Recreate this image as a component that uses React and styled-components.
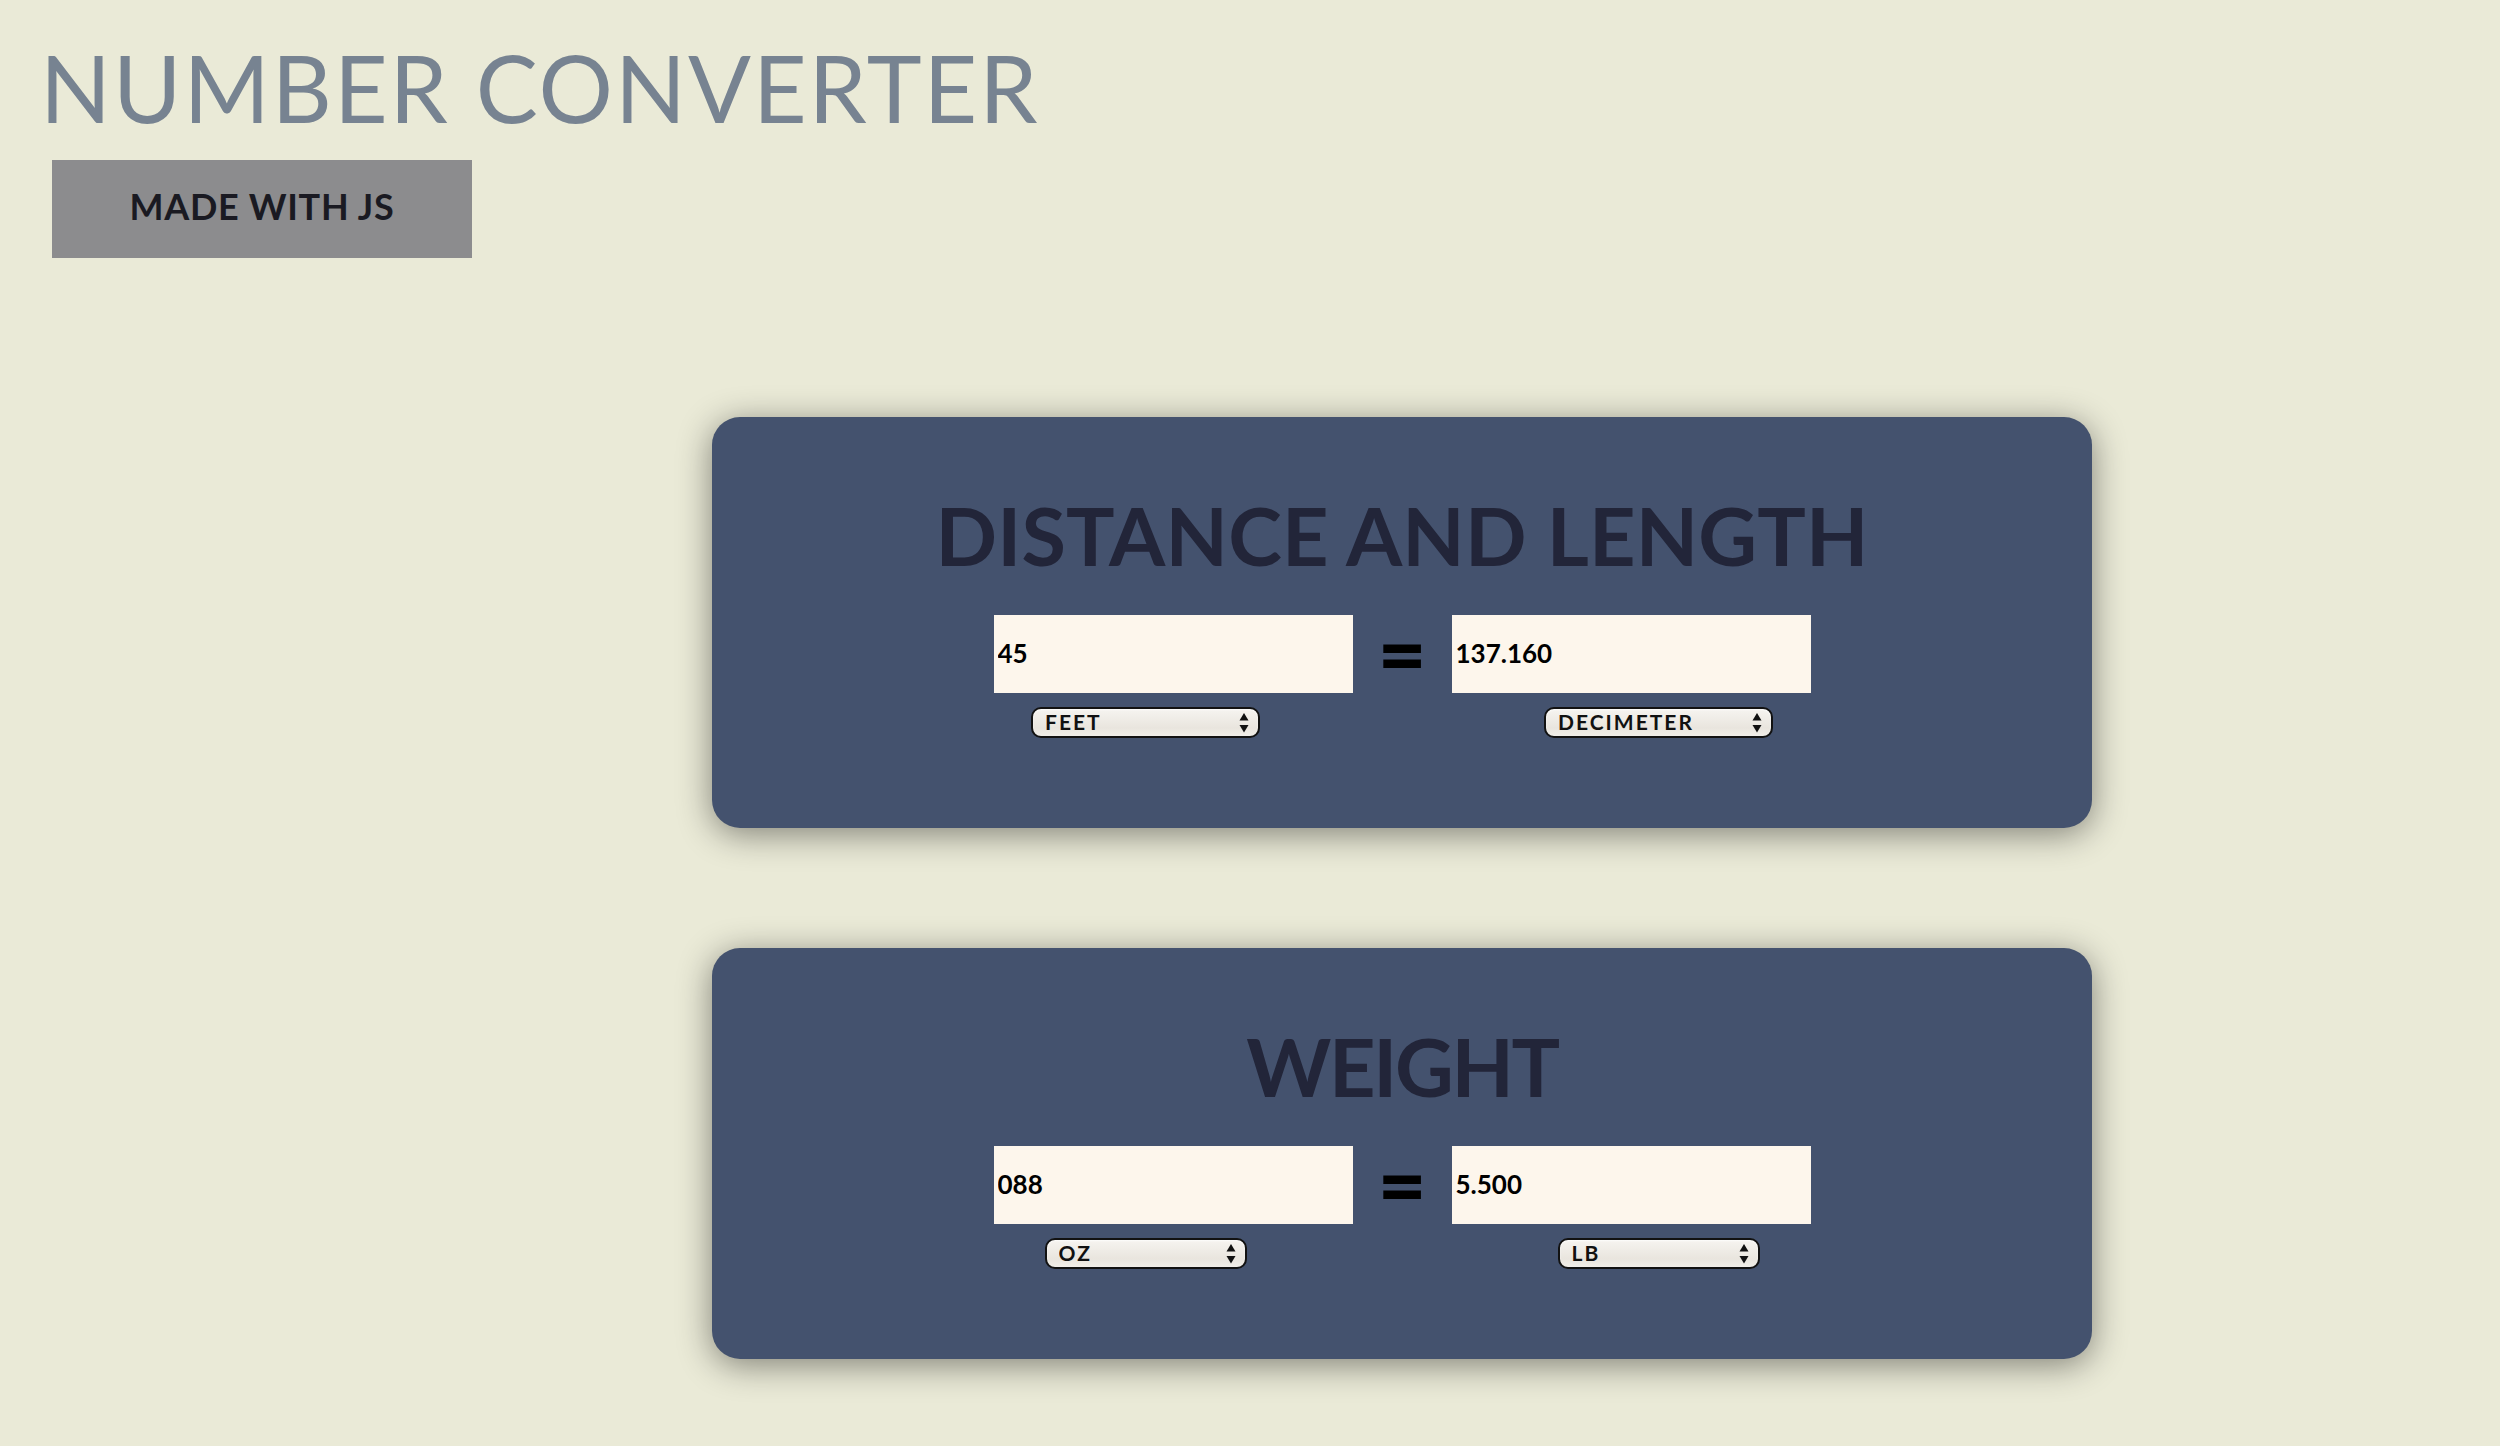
import React from "react";
import styled, { createGlobalStyle } from "styled-components";

//======================================================
const GlobalStyle = createGlobalStyle`
     html, body {
          margin: 0;
          padding: 0;
          background: #eaead7;
          font-family: Lato, "Liberation Sans", sans-serif;
     }
`;
//======================================================
const Page = styled.div`
     min-height: 1446px;
     padding: 41px 0 0 40px;
     box-sizing: border-box;
`;

const Title = styled.h1`
     margin: 0;
     font-size: 93px;
     line-height: 1;
     font-weight: 400;
     color: #778391;
     letter-spacing: 2px;
`;

const MadeWith = styled.div`
     width: 420px;
     height: 98px;
     margin: 26px 0 0 12px;
     box-sizing: border-box;
     padding-bottom: 6px;
     background: #8c8c8e;
     display: flex;
     align-items: center;
     justify-content: center;
     font-size: 36px;
     font-weight: 700;
     letter-spacing: 0.7px;
     color: #1a1a22;
`;
//======================================================
const Cards = styled.main`
     display: flex;
     flex-direction: column;
     gap: 120px;
     margin: 159px 0 0 672px;
     width: 1380px;
`;

const Card = styled.section`
     background: #44526e;
     border-radius: 28px;
     box-shadow: 0 6px 34px rgba(0, 0, 0, 0.45);
     padding: 77px 0 90px;
     display: flex;
     flex-direction: column;
     align-items: center;
`;

const CardTitle = styled.h2`
     margin: 0 0 40px;
     font-size: 81px;
     line-height: 1;
     font-weight: 700;
     letter-spacing: ${(props) => props.spacing || 0}px;
     color: #222539;
`;

const InputRow = styled.div`
     display: flex;
     align-items: center;
     gap: 30px;
`;

const NumberInput = styled.input`
     width: 359px;
     height: 78px;
     box-sizing: border-box;
     border: none;
     outline: none;
     padding: 0 0 3px 4px;
     background: #fdf6ec;
     font-family: Lato, "Liberation Sans", sans-serif;
     font-size: 26px;
     font-weight: 700;
     color: #000;
`;

const Equals = styled.span`
     width: 39px;
     height: 78px;
     display: flex;
     align-items: center;
     justify-content: center;
     font-size: 84px;
     line-height: 1;
     font-weight: 900;
     color: #000;
     padding-bottom: 4px;
     box-sizing: border-box;
`;

const SelectRow = styled.div`
     width: 1026px;
     margin-top: 14px;
     display: flex;
     justify-content: space-around;
`;

const SelectWrap = styled.div`
     position: relative;
     width: ${(props) => props.w}px;
`;

const UnitSelect = styled.select`
     appearance: none;
     -webkit-appearance: none;
     width: 100%;
     height: 31px;
     box-sizing: border-box;
     border: 2px solid #121212;
     border-radius: 10px;
     padding: 0 0 2px 12px;
     background: linear-gradient(#f6f4f0, #e9e5de 70%, #f1eee8);
     box-shadow: inset 0 1px 2px rgba(255, 255, 255, 0.8);
     font-family: Lato, "Liberation Sans", sans-serif;
     font-size: 21px;
     font-weight: 700;
     letter-spacing: 2px;
     color: #111;
     outline: none;
`;

const Arrows = styled.svg`
     position: absolute;
     right: 11px;
     top: 6px;
     pointer-events: none;
`;
//======================================================
const lengthUnits = ["KILOMETER", "METER", "DECIMETER", "CENTIMETER", "MILLIMETER", "MILE", "YARD", "FEET", "INCH"];
const weightUnits = ["KG", "G", "MG", "LB", "OZ", "TON"];
//======================================================

const Unit = ({ units, value, w }) => {
     return (
          <SelectWrap w={w}>
               <UnitSelect defaultValue={value}>
                    {units.map((u) => (
                         <option key={u} value={u}>
                              {u}
                         </option>
                    ))}
               </UnitSelect>
               <Arrows width="10" height="20" viewBox="0 0 10 20">
                    <polygon points="5,0 9.5,7.5 0.5,7.5" fill="#111" />
                    <polygon points="0.5,12 9.5,12 5,19.5" fill="#111" />
               </Arrows>
          </SelectWrap>
     );
};

const Converter = ({ title, spacing, from, to, units, fromUnit, toUnit, w }) => {
     return (
          <Card>
               <CardTitle spacing={spacing}>{title}</CardTitle>
               <InputRow>
                    <NumberInput type="text" defaultValue={from} />
                    <Equals>=</Equals>
                    <NumberInput type="text" defaultValue={to} />
               </InputRow>
               <SelectRow>
                    <Unit units={units} value={fromUnit} w={w} />
                    <Unit units={units} value={toUnit} w={w} />
               </SelectRow>
          </Card>
     );
};

const App = () => {
     return (
          <>
               <GlobalStyle />
               <Page>
                    <Title>NUMBER CONVERTER</Title>
                    <MadeWith>MADE WITH JS</MadeWith>
                    <Cards>
                         <Converter
                              title="DISTANCE AND LENGTH"
                              spacing={0.2}
                              from="45"
                              to="137.160"
                              units={lengthUnits}
                              fromUnit="FEET"
                              toUnit="DECIMETER"
                              w={229}
                         />
                         <Converter
                              title="WEIGHT"
                              spacing={-2.3}
                              from="088"
                              to="5.500"
                              units={weightUnits}
                              fromUnit="OZ"
                              toUnit="LB"
                              w={202}
                         />
                    </Cards>
               </Page>
          </>
     );
};

export default App;
